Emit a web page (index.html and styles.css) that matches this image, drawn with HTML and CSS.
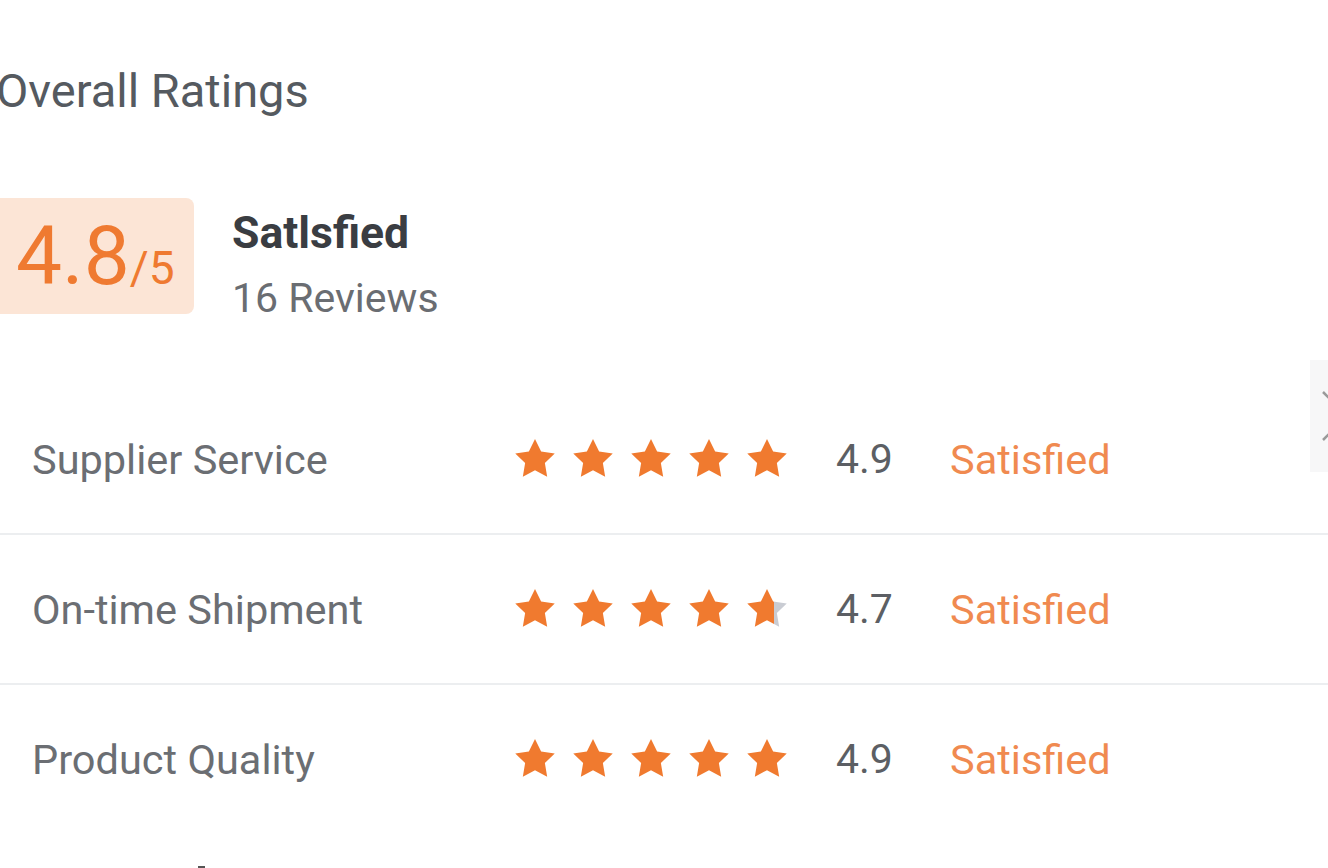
FILE: index.html
```html
<!DOCTYPE html>
<html lang="en">
<head>
<meta charset="utf-8">
<title>Overall Ratings</title>
<link rel="stylesheet" href="styles.css">
</head>
<body>
<svg width="0" height="0" class="defs" aria-hidden="true">
  <defs>
    <symbol id="star" viewBox="0 0 24 24"><path d="M12 1.6l3.2 6.5 7.1 1-5.15 5 1.2 7.1L12 17.85 5.65 21.2l1.2-7.1-5.15-5 7.1-1z"/></symbol>
    <linearGradient id="part" x1="0" x2="1" y1="0" y2="0">
      <stop offset="0.68" stop-color="#f07a2f"/>
      <stop offset="0.68" stop-color="#c9ccd3"/>
    </linearGradient>
  </defs>
</svg>
<main class="ratings">
  <h2 class="title">Overall Ratings</h2>
  <section class="summary">
    <div class="score"><span class="score-big">4.8</span><span class="score-small">/5</span></div>
    <div class="summary-text">
      <div class="summary-label">Satlsfied</div>
      <div class="summary-count">16 Reviews</div>
    </div>
  </section>
  <section class="rows">
    <div class="row">
      <div class="label">Supplier Service</div>
      <div class="stars">
        <svg class="star"><use href="#star"/></svg>
        <svg class="star"><use href="#star"/></svg>
        <svg class="star"><use href="#star"/></svg>
        <svg class="star"><use href="#star"/></svg>
        <svg class="star"><use href="#star"/></svg>
      </div>
      <div class="value">4.9</div>
      <div class="status">Satisfied</div>
    </div>
    <div class="row">
      <div class="label">On-time Shipment</div>
      <div class="stars">
        <svg class="star"><use href="#star"/></svg>
        <svg class="star"><use href="#star"/></svg>
        <svg class="star"><use href="#star"/></svg>
        <svg class="star"><use href="#star"/></svg>
        <svg class="star star-part"><use href="#star"/></svg>
      </div>
      <div class="value">4.7</div>
      <div class="status">Satisfied</div>
    </div>
    <div class="row">
      <div class="label">Product Quality</div>
      <div class="stars">
        <svg class="star"><use href="#star"/></svg>
        <svg class="star"><use href="#star"/></svg>
        <svg class="star"><use href="#star"/></svg>
        <svg class="star"><use href="#star"/></svg>
        <svg class="star"><use href="#star"/></svg>
      </div>
      <div class="value">4.9</div>
      <div class="status">Satisfied</div>
    </div>
  </section>
  <div class="next-mark"></div>
  <button class="slide-next" aria-label="Next">
    <svg width="30" height="54" viewBox="0 0 30 54"><path d="M1 3l24 24-24 24" fill="none" stroke="#9a9a9a" stroke-width="2.5"/></svg>
  </button>
</main>
</body>
</html>
```
FILE: styles.css
```css
html, body {
  margin: 0;
  padding: 0;
  background: #ffffff;
  overflow: hidden;
}
body {
  width: 1328px;
  height: 868px;
  font-family: Roboto, "Liberation Sans", Arial, sans-serif;
  color: #666;
}
.defs {
  position: absolute;
  width: 0;
  height: 0;
}
.ratings {
  position: relative;
  width: 1328px;
  height: 868px;
  overflow: hidden;
}
.title {
  margin: 0;
  padding-top: 64px;
  margin-left: -4px;
  font-size: 47px;
  line-height: 54px;
  font-weight: 400;
  color: #555a60;
}
.summary {
  display: flex;
  align-items: flex-start;
  margin-top: 80px;
  gap: 38px;
}
.score {
  width: 194px;
  height: 116px;
  box-sizing: border-box;
  background: #fce5d6;
  border-radius: 0 8px 8px 0;
  padding-left: 16px;
  line-height: 116px;
  color: #ef7a31;
  white-space: nowrap;
}
.score-big {
  font-size: 82px;
}
.score-small {
  font-size: 46px;
}
.summary-text {
  padding-top: 9px;
}
.summary-label {
  font-size: 44.5px;
  line-height: 52px;
  font-weight: 700;
  color: #3a3d42;
}
.summary-count {
  font-size: 41px;
  line-height: 52px;
  margin-top: 13px;
  color: #6a6d72;
}
.rows {
  margin-top: 61px;
}
.row {
  display: grid;
  grid-template-columns: 480px 324px 114px 1fr;
  align-items: center;
  height: 148px;
  padding-left: 32px;
  border-bottom: 2px solid #eceef0;
}
.row:last-child {
  border-bottom: none;
}
.label {
  font-size: 41.5px;
  color: #6b6e73;
}
.stars {
  display: flex;
  gap: 12px;
}
.star {
  width: 46px;
  height: 46px;
  fill: #f07a2f;
}
.star-part {
  fill: url(#part);
}
.value {
  font-size: 41px;
  color: #5c5f64;
}
.status {
  font-size: 41.5px;
  color: #f08a50;
}
.next-mark {
  margin-top: 33px;
  margin-left: 198px;
  width: 7px;
  height: 3px;
  background: #555;
}
.slide-next {
  position: absolute;
  left: 1310px;
  top: 360px;
  width: 18px;
  height: 112px;
  padding: 0 0 0 12px;
  border: none;
  background: #f7f7f8;
  display: flex;
  align-items: center;
  justify-content: flex-start;
  overflow: visible;
}
.slide-next svg {
  flex: none;
}
```
